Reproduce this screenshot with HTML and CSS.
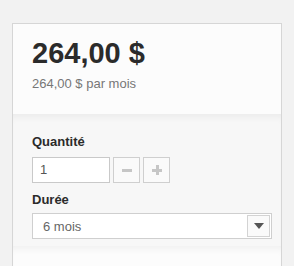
FILE: index.html
```html
<!DOCTYPE html>
<html lang="fr">
<head>
    <meta charset="UTF-8">
    <meta name="viewport" content="width=device-width, initial-scale=1.0">
    <title>Abonnement</title>
    <link rel="stylesheet" href="styles.css">
</head>
<body>

    <div class="card">
        <div class="price-box">
            <div class="price">264,00 $</div>
            <div class="price-sub">264,00 $ par mois</div>
        </div>

        <div class="options">
            <div class="label">Quantité</div>
            <div class="qty-row">
                <div class="qty-input">1</div>
                <div class="qty-btn"><span class="minus"></span></div>
                <div class="qty-btn"><span class="plus"></span></div>
            </div>

            <div class="label label-second">Durée</div>
            <div class="select">
                <span class="select-text">6 mois</span>
                <span class="select-arrow"><span class="triangle"></span></span>
            </div>
        </div>

        <div class="card-bottom"></div>
    </div>

</body>
</html>
```

FILE: styles.css
```css
body {
    font-family: 'Liberation Sans', Arial, sans-serif;
    background-color: #f2f2f2;
    margin: 0;
    padding: 23px 12px 0 12px;
}

.card {
    width: 268px;
    border: 1px solid #d6d6d6;
    border-bottom: none;
    background-color: #fcfcfc;
}

.price-box {
    padding: 13px 19px 22px 19px;
}

.price {
    font-size: 29px;
    line-height: 32px;
    font-weight: bold;
    color: #2b2b2b;
}

.price-sub {
    margin-top: 7px;
    font-size: 13px;
    line-height: 16px;
    color: #777777;
}

.options {
    background-color: #f7f7f7;
    box-shadow: inset 0 7px 7px -4px rgba(0, 0, 0, 0.05);
    padding: 20px 9px 7px 19px;
}

.label {
    font-size: 13px;
    line-height: 16px;
    font-weight: bold;
    color: #2b2b2b;
    margin-bottom: 7px;
}

.label-second {
    margin-top: 9px;
    margin-bottom: 5px;
}

.qty-row {
    display: flex;
    gap: 3px;
}

.qty-input {
    width: 69px;
    height: 24px;
    border: 1px solid #c9c9c9;
    background-color: #ffffff;
    padding-left: 7px;
    font-size: 13px;
    line-height: 24px;
    color: #555555;
}

.qty-btn {
    width: 25px;
    height: 24px;
    border: 1px solid #cfcfcf;
    background-color: #fafafa;
    display: flex;
    align-items: center;
    justify-content: center;
}

.minus {
    width: 10px;
    height: 3px;
    background-color: #c6c6c6;
}

.plus {
    width: 10px;
    height: 10px;
    position: relative;
}

.plus::before,
.plus::after {
    content: "";
    position: absolute;
    background-color: #c6c6c6;
}

.plus::before {
    left: 0;
    top: 4px;
    width: 10px;
    height: 3px;
}

.plus::after {
    left: 4px;
    top: 0;
    width: 3px;
    height: 10px;
}

.select {
    height: 24px;
    border: 1px solid #cfcfcf;
    background-color: #ffffff;
    display: flex;
    align-items: center;
    justify-content: space-between;
    padding: 0 1px 0 10px;
}

.select-text {
    font-size: 13px;
    color: #666666;
}

.select-arrow {
    width: 21px;
    height: 20px;
    border: 1px solid #d3d3d3;
    background-color: #fafafa;
    display: flex;
    align-items: center;
    justify-content: center;
}

.triangle {
    width: 0;
    height: 0;
    border-left: 5px solid transparent;
    border-right: 5px solid transparent;
    border-top: 6px solid #555555;
}

.card-bottom {
    height: 30px;
    box-shadow: inset 0 7px 7px -4px rgba(0, 0, 0, 0.05);
}
```
